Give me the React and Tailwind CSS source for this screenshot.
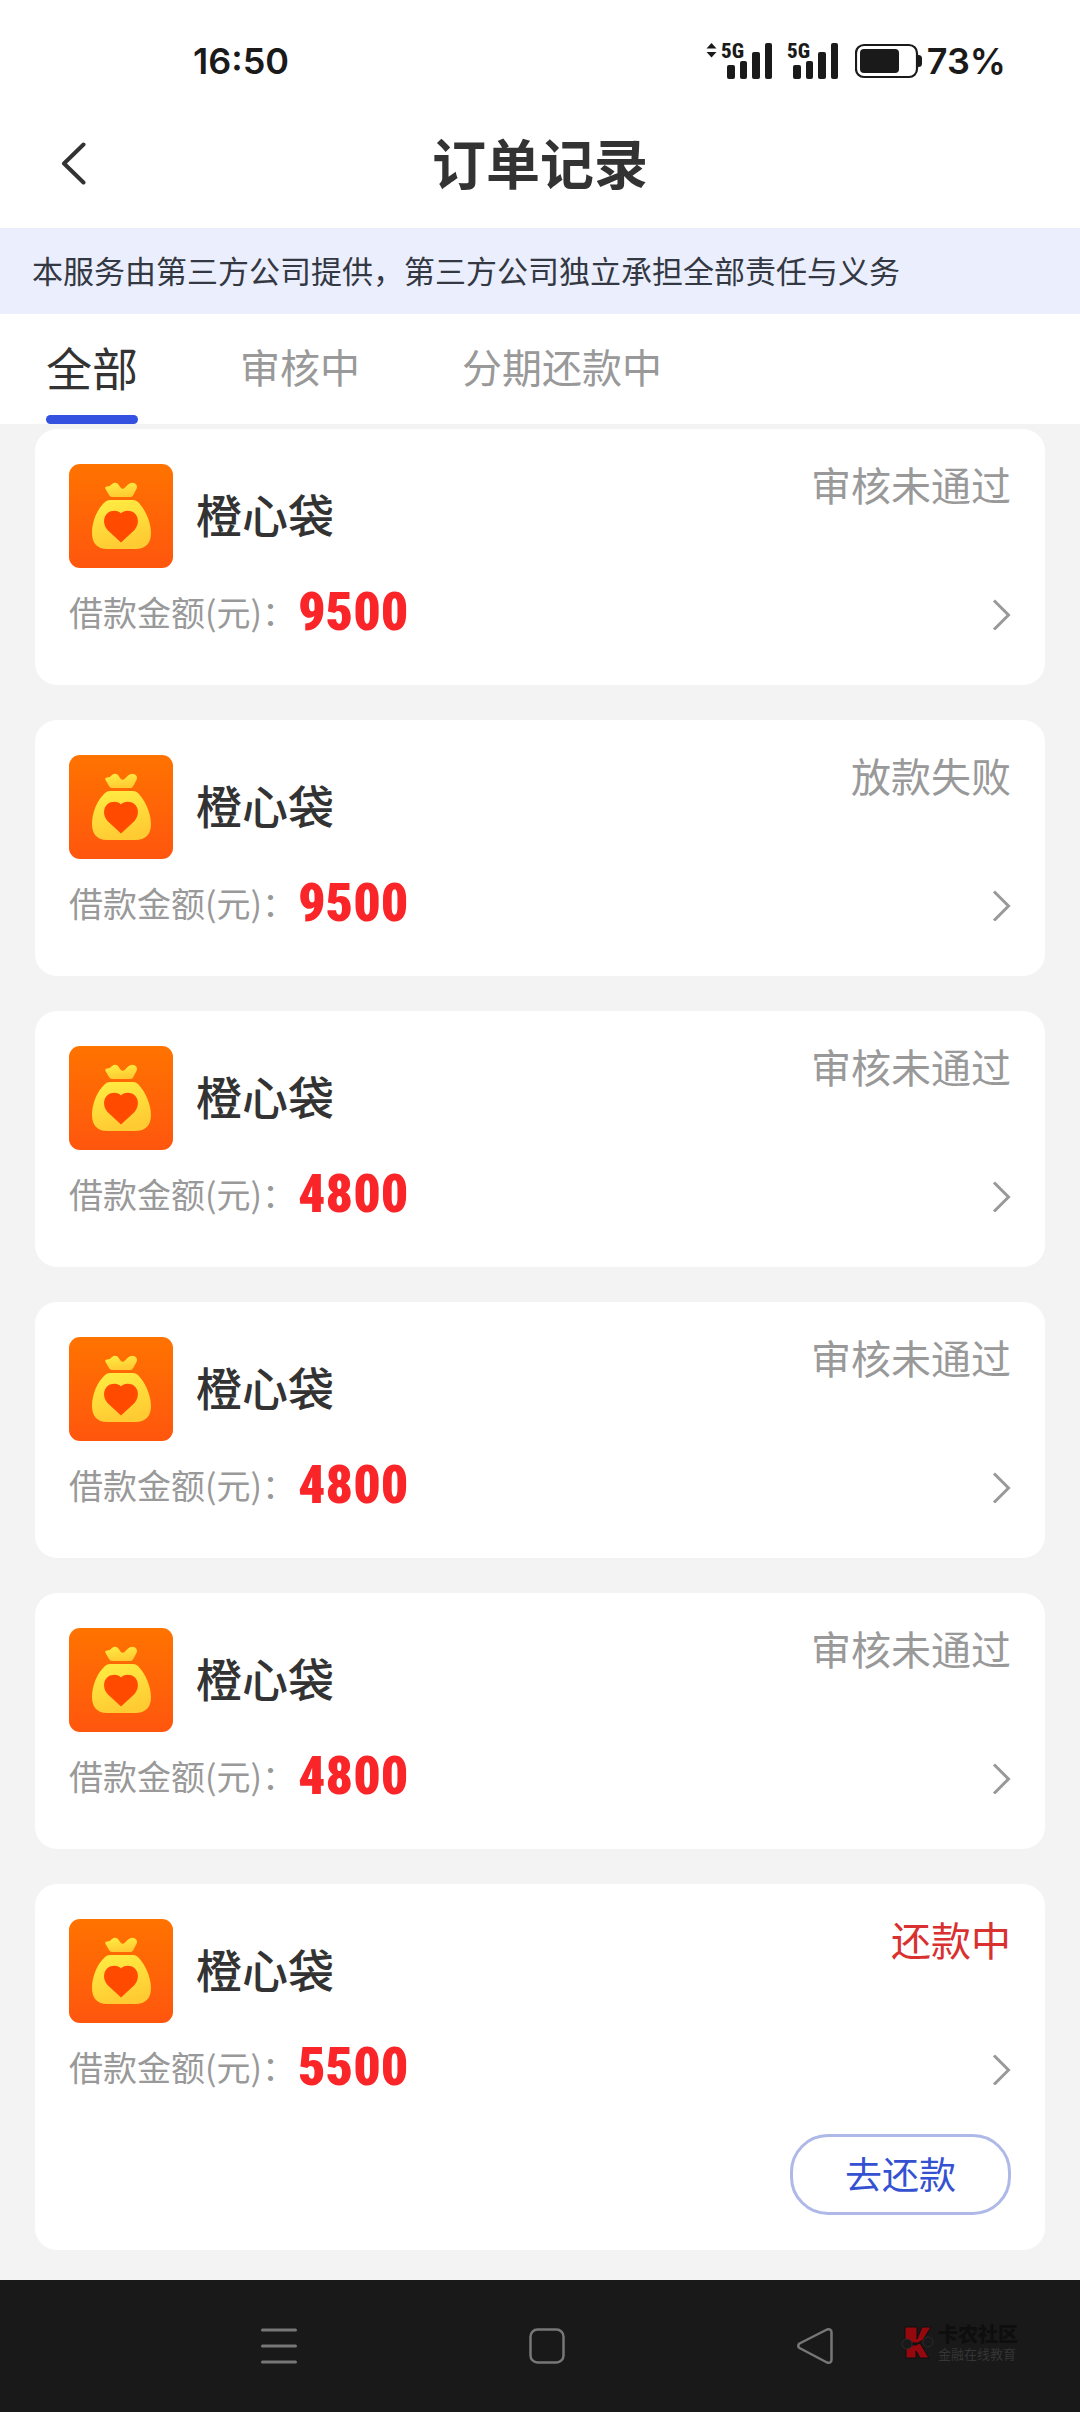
import React, { useState } from "react";

const tabs = ["全部", "审核中", "分期还款中"];

const orders = [
  { id: 1, amount: 9500, status: "审核未通过" },
  { id: 2, amount: 9500, status: "放款失败" },
  { id: 3, amount: 4800, status: "审核未通过" },
  { id: 4, amount: 4800, status: "审核未通过" },
  { id: 5, amount: 4800, status: "审核未通过" },
  { id: 6, amount: 5500, status: "还款中", repaying: true },
];

const Signal = () => (
  <svg className="h-12 w-[52px]" viewBox="0 -5 52 48" fill="#1a1a1a">
    <text
      x="0"
      y="16"
      fontSize="21"
      fontWeight="800"
      className="font-['Roboto_Condensed','Liberation_Sans_Narrow',sans-serif]"
    >
      5G
    </text>
    <rect x="6" y="23" width="8" height="14" rx="2" />
    <rect x="19" y="19" width="7" height="18" rx="2" />
    <rect x="31" y="10" width="8" height="27" rx="2" />
    <rect x="44" y="1" width="7" height="36" rx="2" />
  </svg>
);

const StatusBar = () => (
  <div className="flex h-[122px] items-center justify-between pr-[74px] pl-[193px] font-['Inter',sans-serif] text-[36px] font-semibold text-[#1a1a1a]">
    <span>16:50</span>
    <div className="flex items-center">
      <svg className="mr-1 h-12 w-[11px]" viewBox="0 -5 11 48" fill="#1a1a1a">
        <path d="M5.5 1L10.5 6.5H.5z" />
        <path d="M5.5 15.5L10.5 10H.5z" />
      </svg>
      <div className="flex gap-[14px]">
        <Signal />
        <Signal />
      </div>
      <svg className="mr-1 ml-4 h-9 w-[68px]" viewBox="0 0 68 36">
        <rect x="1" y="2" width="61" height="32" rx="8" fill="none" stroke="#1a1a1a" strokeWidth="2.2" />
        <rect x="5" y="6" width="39" height="24" rx="4" fill="#1a1a1a" />
        <path d="M62 12h1.5a3.500 3.500 0 0 1 3.500 3.500v5a3.500 3.500 0 0 1-3.500 3.500H62z" fill="#1a1a1a" />
      </svg>
      <span>73%</span>
    </div>
  </div>
);

const Logo = () => (
  <svg className="size-[104px] shrink-0" viewBox="0 0 104 104">
    <defs>
      <linearGradient id="logoBg" x1="0" y1="0" x2="0" y2="1">
        <stop offset="0" stopColor="#ff7300" />
        <stop offset="1" stopColor="#ff560e" />
      </linearGradient>
      <linearGradient id="logoBag" x1="0" y1="0" x2="0.3" y2="1">
        <stop offset="0" stopColor="#ffee43" />
        <stop offset="1" stopColor="#ffcb33" />
      </linearGradient>
    </defs>
    <rect width="104" height="104" rx="11" fill="url(#logoBg)" />
    <path
      d="M40 31L36.500 25Q35.500 22.500 38 22.500Q41 22.500 43 20Q46 17.500 49 20L51.500 23.500Q53.500 26 56 23.500L59 20.500Q62.500 17.500 66 19.500Q69 21.500 67.500 25L64 31.500Q63 33 61 33H43Q41 33 40 31z"
      fill="url(#logoBag)"
    />
    <path
      d="M41 36H64Q67 36 69 38C76 45 82 58 82 69C82 79 77 85 66 85H38C28 85 23 79 23 69C23 58 28 45 36 38Q38 36 41 36z"
      fill="url(#logoBag)"
    />
    <path
      d="M52 78.500L38.500 66C32.500 59 35 50 41 47.500C45.500 46 49.500 46.500 52 49.500C54.500 46.500 58.500 46 63 47.500C69 50 71.500 59 65.500 66z"
      fill="#ff4a00"
    />
  </svg>
);

const OrderCard = ({ order }) => (
  <article
    className={`rounded-[22px] bg-white px-[34px] pt-[35px] ${
      order.repaying ? "pb-[35px]" : "pb-[49px]"
    }`}
  >
    <div className="flex items-start justify-between">
      <div className="flex items-center gap-[23px]">
        <Logo />
        <h2 className="pb-[6px] text-[46px] leading-[60px] font-medium text-[#333]">橙心袋</h2>
      </div>
      <span
        className={`text-[40px] leading-[40px] ${
          order.repaying ? "text-[#d93030]" : "text-[#999]"
        }`}
      >
        {order.status}
      </span>
    </div>
    <div className="mt-6 flex h-11 items-center justify-between">
      <p className="flex items-center gap-[2px] pb-[4px] text-[34px] leading-[44px] text-[#999]">
        借款金额(元)：
        <b className="font-['Roboto_Condensed','Liberation_Sans_Narrow',sans-serif] text-[54px] leading-[44px] font-black text-[#fa2528]">
          {order.amount}
        </b>
      </p>
      <button aria-label="查看订单">
        <svg className="h-8 w-5" viewBox="0 0 20 32" fill="none" stroke="#999" strokeWidth="3">
          <path d="M3 2.500L17.500 17L3 31.500" />
        </svg>
      </button>
    </div>
    {order.repaying && (
      <div className="mt-[43px] flex justify-end">
        <button className="h-[81px] w-[221px] rounded-[38px] border-[3px] border-[#aeb9e8] pb-[4px] text-[37px] leading-[44px] text-[#3451d1]">
          去还款
        </button>
      </div>
    )}
  </article>
);

const Watermark = () => (
  <div className="absolute top-[42px] right-[62px] flex items-center">
    <svg className="h-9 w-[38px]" viewBox="0 0 38 36">
      <g fill="#95090e" stroke="#0f0f0f">
        <path d="M5 3H17V15L22 3H31L23 16L18 19H5z" />
        <path d="M6 21H16L20 19L29 34H20L16 27V34H6z" />
      </g>
      <circle cx="7" cy="20" r="5" fill="#191919" stroke="#2c2c2c" />
      <circle cx="28" cy="18" r="5" fill="#191919" stroke="#2c2c2c" />
    </svg>
    <div className="flex flex-col">
      <span className="text-[20px] leading-6 font-black text-[#0e0e0e]">卡农社区</span>
      <span className="text-[13px] leading-4 text-[#353535]">金融在线教育</span>
    </div>
  </div>
);

const NavBar = () => (
  <nav className="relative flex h-[132px] items-center justify-center gap-[232px] bg-[#191919] pl-[14px]">
    <button aria-label="菜单">
      <svg className="size-9" viewBox="0 0 36 36" stroke="#777" strokeWidth="3" strokeLinecap="round">
        <path d="M1.500 2H34.500M1.500 18H34.500M1.500 34H34.500" />
      </svg>
    </button>
    <button aria-label="主页">
      <svg className="size-9" viewBox="0 0 36 36" fill="none" stroke="#777" strokeWidth="2.5">
        <rect x="1.5" y="1.5" width="33" height="33" rx="7" />
      </svg>
    </button>
    <button aria-label="后退">
      <svg className="size-9" viewBox="0 0 36 36" fill="none" stroke="#777" strokeWidth="2.5" strokeLinejoin="round">
        <path d="M2.500 15.500L30 1.500Q34.500 .5 34.500 4.500V31.500Q34.500 35.500 30 34.500L2.500 20Q0 18 2.500 15.500z" />
      </svg>
    </button>
    <Watermark />
  </nav>
);

const App = () => {
  const [active, setActive] = useState(0);

  return (
    <div className="flex min-h-screen flex-col bg-[#f3f3f3] font-['Noto_Sans_CJK_SC',sans-serif]">
      <header className="bg-white">
        <StatusBar />
        <div className="grid h-[106px] grid-cols-[1fr_auto_1fr] items-center px-[60px] pb-[24px]">
          <button aria-label="返回" className="justify-self-start">
            <svg className="h-11 w-7" viewBox="0 0 28 44" fill="none" stroke="#333" strokeWidth="4" strokeLinecap="round" strokeLinejoin="round">
              <path d="M23.500 3.500L4 22.500L23.500 41.500" />
            </svg>
          </button>
          <h1 className="pb-[2px] text-[54px] leading-[60px] font-bold text-[#333]">订单记录</h1>
        </div>
      </header>

      <p className="bg-[#ebeefd] px-8 pt-5 pb-[22px] text-[31px] leading-[44px] text-[#333842]">
        本服务由第三方公司提供，第三方公司独立承担全部责任与义务
      </p>

      <div className="flex h-[110px] items-stretch gap-[102px] bg-white px-[46px]">
        {tabs.map((tab, index) => (
          <button
            key={tab}
            onClick={() => setActive(index)}
            className={`flex flex-col items-center justify-between pt-[22px] leading-[60px] ${
              index === active ? "text-[46px] text-[#333]" : "text-[40px] text-[#999]"
            }`}
          >
            {tab}
            {index === active && <span className="h-[9px] w-full rounded-full bg-[#3451e0]" />}
          </button>
        ))}
      </div>

      <main className="flex grow flex-col gap-[35px] px-[35px] pt-[5px] pb-[30px]">
        {orders.map((order) => (
          <OrderCard key={order.id} order={order} />
        ))}
      </main>

      <NavBar />
    </div>
  );
};

export default App;
